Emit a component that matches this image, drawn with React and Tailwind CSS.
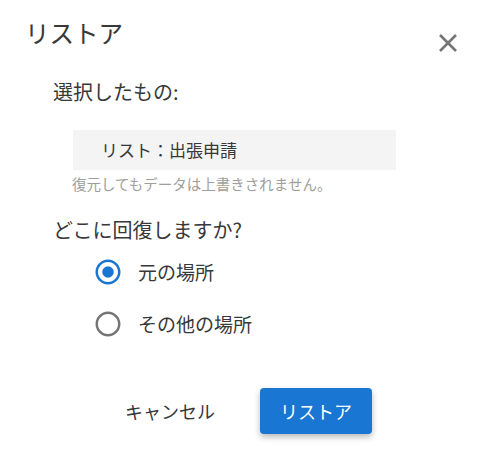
import React, { useState } from 'react';

function RadioIcon({ checked }) {
  return (
    <svg width="30" height="30" viewBox="0 0 24 24" className={checked ? 'text-[#1976d2]' : 'text-[#757575]'}>
      <path
        fill="currentColor"
        d="M12 2C6.48 2 2 6.48 2 12s4.48 10 10 10 10-4.48 10-10S17.52 2 12 2zm0 18c-4.42 0-8-3.58-8-8s3.58-8 8-8 8 3.58 8 8-3.58 8-8 8z"
      />
      {checked && <circle cx="12" cy="12" r="4.6" fill="currentColor" />}
    </svg>
  );
}

const options = [
  { id: 'original', label: '元の場所' },
  { id: 'other', label: 'その他の場所' },
];

export default function App() {
  const [target, setTarget] = useState('original');

  return (
    <div
      className="w-[487px] h-[473px] bg-white text-[#383838] flex flex-col"
      style={{ fontFamily: '"Noto Sans CJK JP", "Noto Sans", sans-serif' }}
    >
      {/* Header */}
      <div className="flex items-start justify-between pl-[25px] pr-[29px] pt-[17px]">
        <h2 className="text-[24.5px] leading-[32px] font-normal">リストア</h2>
        <button className="mt-[16px]" title="閉じる">
          <svg width="20" height="20" viewBox="0 0 20 20">
            <path d="M2 2L18 18M18 2L2 18" stroke="#757575" strokeWidth="2.6" />
          </svg>
        </button>
      </div>

      {/* Body */}
      <div className="ml-[53px] flex flex-col">
        <p className="mt-[25px] text-[20px] leading-[28px]">選択したもの:</p>
        <div className="mt-[24px] ml-[20px] w-[323px] h-[40px] bg-[#f4f4f4] flex items-center pl-[28px] text-[17px]">
          リスト：出張申請
        </div>
        <p className="mt-[5px] ml-[19px] text-[14.5px] leading-[18px] text-[#9e9e9e]">
          復元してもデータは上書きされません。
        </p>

        <p className="mt-[23px] text-[20px] leading-[28px]">どこに回復しますか?</p>
        <div className="mt-[2px] flex flex-col">
          {options.map((o) => (
            <label
              key={o.id}
              className="h-[52px] flex items-center cursor-pointer"
              onClick={() => setTarget(o.id)}
            >
              <span className="ml-[40px]">
                <RadioIcon checked={target === o.id} />
              </span>
              <span className="ml-[15px] text-[19px] leading-[28px]">{o.label}</span>
            </label>
          ))}
        </div>

        {/* Actions */}
        <div className="mt-[38px] ml-[56px] flex items-center gap-[29px]">
          <button className="h-[46px] px-4 text-[18px] text-[#383838]">キャンセル</button>
          <button className="w-[112px] h-[46px] rounded-[4px] bg-[#1976d2] text-white text-[18px] shadow-[0_3px_6px_rgba(0,0,0,0.28)]">
            リストア
          </button>
        </div>
      </div>
    </div>
  );
}
